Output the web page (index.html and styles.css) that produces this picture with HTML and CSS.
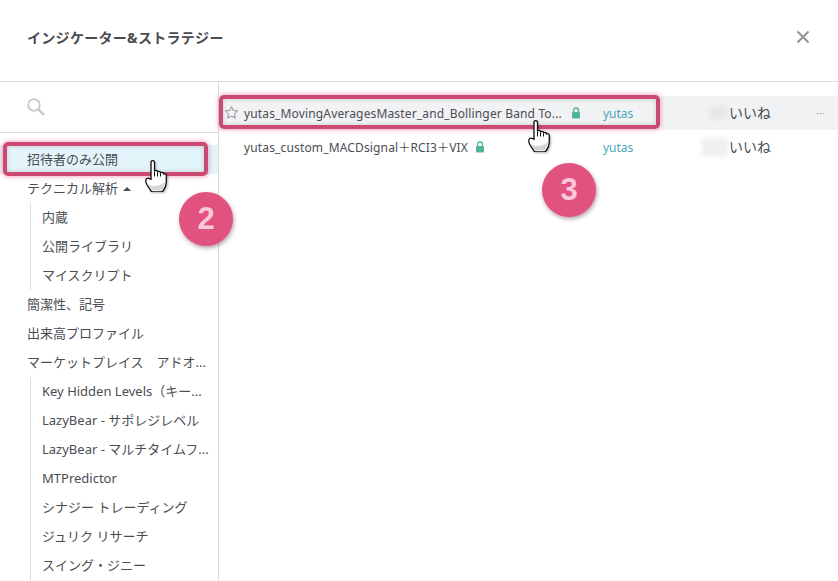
FILE: index.html
```html
<!DOCTYPE html>
<html lang="ja">
<head>
  <meta charset="UTF-8">
  <title>インジケーター&amp;ストラテジー</title>
  <link rel="stylesheet" href="styles.css">
</head>
<body>
  <svg class="defs" width="0" height="0">
    <symbol id="hand" viewBox="0 0 22 32">
      <path d="M6 2.500c0-2.500 3.500-2.500 3.500 0v9c0-1.600 3-1.600 3 0v1c0-1.600 3-1.600 3 0v1c0-1.600 3-1.600 3 0v.5c1.500-.8 2.800.2 2.800 1.700v6.500c0 3.500-1.300 6-3.300 8.800-.5.700-1 .9-2 .9H8c-1 0-1.500-.3-2-.9C3.500 26.500 1 25 .8 21.500c-.2-3 1.500-3.700 3.200-3.200l2 1z" fill="#fff" stroke="#111" stroke-width="1.300"/>
      <path d="M9.500 11.500v5M12.500 12.500v4M15.500 13.500v3" fill="none" stroke="#111" stroke-width="1"/>
      <path d="M3 24c4 3 11 3 17 -2-.5 3-2 6-3.500 8.500H7.500C6 28.500 4.500 26 3 24z" fill="#d6d6d6"/>
    </symbol>
    <symbol id="lock" viewBox="0 0 10 12">
      <path d="M2.500 5V3.500a2.500 2.500 0 0 1 5 0V5" fill="none" stroke="#4fb49a" stroke-width="1.400"/>
      <rect x="1" y="5" width="8" height="6.500" rx="1" fill="#4fb49a"/>
    </symbol>
  </svg>

  <div class="dialog">
    <header class="dialog-head">
      <h1 class="dialog-title">インジケーター&amp;ストラテジー</h1>
      <svg class="close" width="14" height="14" viewBox="0 0 14 14">
        <path d="M1.500 1.500l11 11M12.500 1.500l-11 11" stroke="#8f9296" stroke-width="2" fill="none"/>
      </svg>
    </header>

    <div class="dialog-body">
      <aside class="side">
        <div class="search">
          <svg width="20" height="20" viewBox="0 0 20 20">
            <circle cx="8" cy="8" r="5.800" fill="none" stroke="#c4c6c8" stroke-width="1.700"/>
            <path d="M12.300 12.300l5.700 5.700" stroke="#c4c6c8" stroke-width="2.400" fill="none"/>
          </svg>
        </div>
        <ul class="menu">
          <li class="menu-item active">招待者のみ公開</li>
          <li class="menu-item">テクニカル解析 <span class="caret"></span></li>
          <li>
            <ul class="submenu">
              <li class="menu-item">内蔵</li>
              <li class="menu-item">公開ライブラリ</li>
              <li class="menu-item">マイスクリプト</li>
            </ul>
          </li>
          <li class="menu-item">簡潔性、記号</li>
          <li class="menu-item">出来高プロファイル</li>
          <li class="menu-item">マーケットプレイス&emsp;アドオ...</li>
          <li>
            <ul class="submenu">
              <li class="menu-item">Key Hidden Levels（キー...</li>
              <li class="menu-item">LazyBear - サポレジレベル</li>
              <li class="menu-item">LazyBear - マルチタイムフ...</li>
              <li class="menu-item">MTPredictor</li>
              <li class="menu-item">シナジー トレーディング</li>
              <li class="menu-item">ジュリク リサーチ</li>
              <li class="menu-item">スイング・ジニー</li>
            </ul>
          </li>
        </ul>
      </aside>

      <main class="scripts">
        <div class="script-row hover">
          <svg class="star" width="15" height="15" viewBox="0 0 24 24">
            <path d="M12 2.500l2.900 6.300 6.800.8-5 4.700 1.300 6.800-6-3.400-6 3.400 1.300-6.800-5-4.700 6.800-.8z" fill="none" stroke="#8c8f93" stroke-width="1.600"/>
          </svg>
          <div class="script-main">
            <span class="script-name">yutas_MovingAveragesMaster_and_Bollinger Band To...</span>
            <svg class="lock" width="10" height="12"><use href="#lock"/></svg>
          </div>
          <a class="author">yutas</a>
          <span class="blur blur-a"></span>
          <span class="likes">いいね</span>
          <span class="more">···</span>
        </div>
        <div class="script-row plain">
          <div class="script-main">
            <span class="script-name">yutas_custom_MACDsignal＋RCI3＋VIX</span>
            <svg class="lock" width="10" height="12"><use href="#lock"/></svg>
          </div>
          <a class="author">yutas</a>
          <span class="blur blur-b"></span>
          <span class="likes">いいね</span>
        </div>
      </main>
    </div>
  </div>

  <!-- 注釈 -->
  <div class="mark mark-menu"></div>
  <div class="mark mark-row"></div>
  <div class="badge badge-2">2</div>
  <div class="badge badge-3">3</div>
  <svg class="cursor cursor-menu" width="22" height="32"><use href="#hand"/></svg>
  <svg class="cursor cursor-row" width="22" height="32"><use href="#hand"/></svg>
</body>
</html>
```

FILE: styles.css
```css
html, body {
  margin: 0;
  height: 581px;
  overflow: hidden;
  background: #fff;
}

body {
  position: relative;
  font-family: "Noto Sans", "Noto Sans CJK JP", sans-serif;
  font-size: 12px;
  color: #4a4d52;
}

ul {
  list-style: none;
  margin: 0;
  padding: 0;
}

.defs {
  position: absolute;
}

.dialog-head {
  height: 82px;
  box-sizing: border-box;
  display: flex;
  align-items: center;
  justify-content: space-between;
  padding: 0 28px 7px 27px;
  border-bottom: 1px solid #d9dcdf;
}

.dialog-title {
  margin: 0;
  font-size: 14px;
  font-weight: bold;
  letter-spacing: .3px;
  color: #494c50;
}

.dialog-body {
  display: flex;
  height: 499px;
}

.side {
  width: 219px;
  box-sizing: border-box;
  border-right: 1px solid #d9dcdf;
  flex: none;
}

.search {
  height: 51px;
  box-sizing: border-box;
  padding: 15px 0 0 26px;
  border-bottom: 1px solid #d9dcdf;
}

.menu {
  padding-top: 12px;
}

.menu-item {
  height: 29px;
  line-height: 29px;
  padding-left: 27px;
  font-size: 13px;
  white-space: nowrap;
  overflow: hidden;
}

.menu-item.active {
  background: #e3f4fa;
}

.caret {
  display: inline-block;
  margin-left: 2px;
  vertical-align: 2px;
  border-left: 4px solid transparent;
  border-right: 4px solid transparent;
  border-bottom: 4px solid #4a4d52;
}

.submenu {
  margin-left: 30px;
  border-left: 1px solid #d9dcdf;
}

.submenu .menu-item {
  padding-left: 11px;
}

.scripts {
  flex: 1;
  padding-top: 14px;
}

.script-row {
  position: relative;
  display: flex;
  align-items: center;
  height: 34px;
  padding-left: 25px;
}

.script-row.hover {
  background: #f1f2f4;
}

.star {
  position: absolute;
  left: 5px;
  top: 9px;
}

.script-main {
  display: flex;
  align-items: center;
  gap: 9px;
  width: 359px;
  flex: none;
}

.script-name {
  white-space: nowrap;
  letter-spacing: .15px;
}

.plain .script-main {
  gap: 7px;
}

.lock {
  flex: none;
}

.author {
  color: #4ca5bd;
  font-size: 12px;
}

.blur {
  position: absolute;
  filter: blur(2px);
}

.blur-a {
  left: 490px;
  top: 10px;
  width: 19px;
  height: 13px;
  background: #e6e7e9;
}

.blur-b {
  left: 483px;
  top: 8px;
  width: 26px;
  height: 19px;
  background: #f0f0f0;
}

.likes {
  position: absolute;
  left: 510px;
  top: 6px;
  font-size: 14px;
}

.more {
  position: absolute;
  left: 597px;
  top: 9px;
  color: #a4a7ab;
  font-size: 11px;
}

/* 注釈 */
.mark {
  position: absolute;
  box-sizing: border-box;
  border: 4px solid #cb4a72;
  border-radius: 5px;
  box-shadow: 0 0 4px 1px rgba(236, 110, 150, .55), inset 0 0 4px rgba(120, 120, 120, .35);
}

.mark-menu {
  left: 3px;
  top: 142px;
  width: 205px;
  height: 34px;
}

.mark-row {
  left: 219px;
  top: 95px;
  width: 441px;
  height: 34px;
}

.badge {
  position: absolute;
  width: 54px;
  height: 54px;
  border-radius: 50%;
  background: #e1527f;
  box-shadow: 1px 2px 4px rgba(90, 40, 60, .45);
  color: #f9c8d9;
  font-family: "Liberation Sans", sans-serif;
  font-size: 31px;
  font-weight: bold;
  line-height: 54px;
  text-align: center;
}

.badge-2 {
  left: 179px;
  top: 192px;
}

.badge-3 {
  left: 542px;
  top: 163px;
}

.cursor {
  position: absolute;
  filter: drop-shadow(1px 1px 1px rgba(0, 0, 0, .3));
}

.cursor-menu {
  left: 145px;
  top: 160px;
}

.cursor-row {
  left: 528px;
  top: 120px;
}
```
